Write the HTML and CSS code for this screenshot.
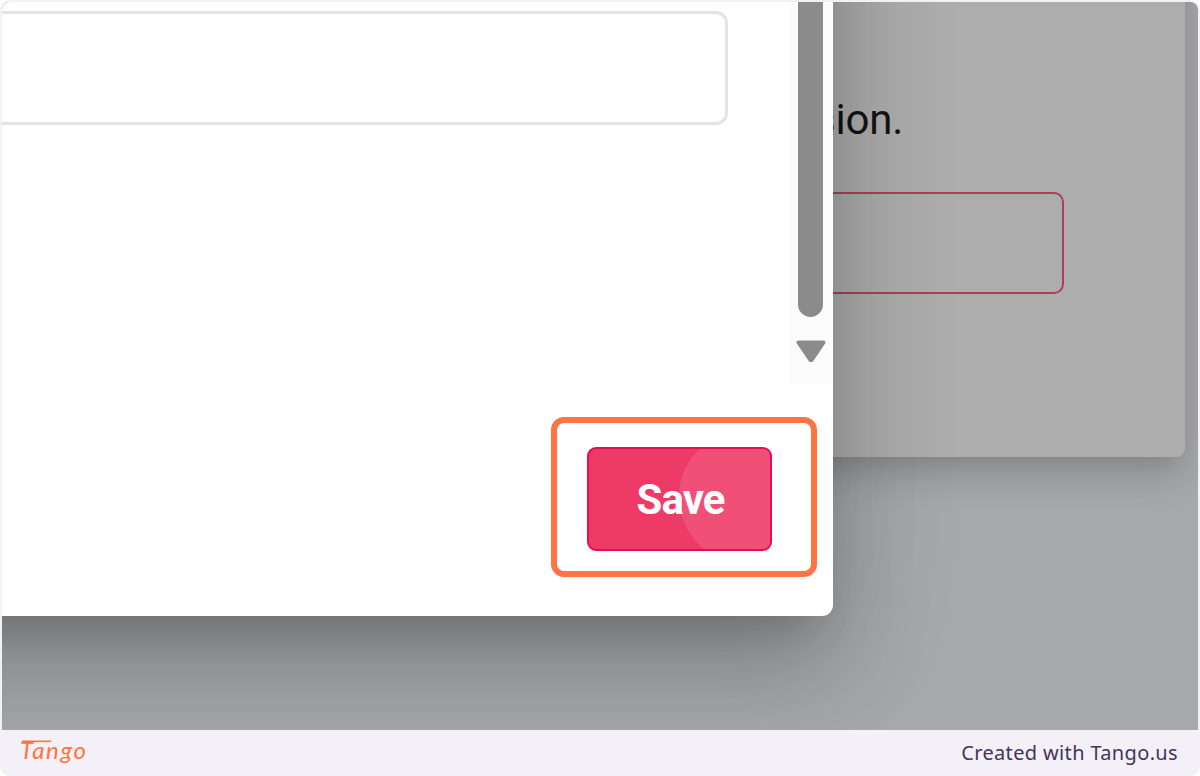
FILE: index.html
```html
<!DOCTYPE html>
<html lang="en">
<head>
    <meta charset="UTF-8">
    <meta name="viewport" content="width=device-width, initial-scale=1.0">
    <title>Save</title>
    <link rel="stylesheet" href="styles.css">
</head>
<body>
    <div class="frame">
        <div class="stage">
            <div class="card">
                <p class="card-text">sion.</p>
                <div class="card-input"></div>
            </div>

            <div class="modal">
                <div class="modal-body">
                    <div class="field"></div>
                    <div class="scrollbar">
                        <div class="scroll-thumb"></div>
                        <svg class="scroll-arrow" width="30" height="24" viewBox="0 0 30 24">
                            <path d="M2.5 3.5H27.5L16 20.5Q15 21.5 14 20.5Z" fill="#8b8b8b" stroke="#8b8b8b" stroke-width="4" stroke-linejoin="round"/>
                        </svg>
                    </div>
                </div>
                <div class="modal-footer">
                    <div class="highlight">
                        <button class="save-button"><span>Save</span></button>
                    </div>
                </div>
            </div>
        </div>

        <div class="footer">
            <svg class="logo" width="76" height="40" viewBox="0 0 76 40">
                <text class="logo-text" x="0" y="25.5" textLength="66">Tango</text>
                <path d="M2 8.3H31" stroke="#ff7442" stroke-width="1.6"/>
            </svg>
            <span class="credit">Created with Tango.us</span>
        </div>
    </div>
</body>
</html>
```
FILE: styles.css
```css
body {
    margin: 0;
    background: white;
    font-family: Roboto, Arial, sans-serif;
}

.frame {
    width: 1200px;
    height: 776px;
    padding: 2px 2px 0;
    box-sizing: border-box;
    background: #f3f1f7;
    border-radius: 10px;
    overflow: hidden;
}

.stage {
    position: relative;
    height: 728px;
    background: #a7a8aa;
    border-radius: 8px 8px 0 0;
    overflow: hidden;
}

.card {
    width: 1183px;
    height: 655px;
    margin-top: -200px;
    padding: 290px 121px 0 0;
    box-sizing: border-box;
    background: #adadad;
    border-radius: 0 0 8px 0;
    box-shadow: 0 14px 22px -9px rgba(0, 0, 0, 0.1),
                0 20px 40px 2px rgba(0, 0, 0, 0.09),
                0 9px 40px 4px rgba(0, 0, 0, 0.06);
}

.card-text {
    margin: 0 0 44px 812px;
    font-size: 42px;
    line-height: 56px;
    letter-spacing: -0.2px;
    color: #141414;
}

.card-input {
    height: 102px;
    box-sizing: border-box;
    border: 2px solid #ae3f58;
    border-radius: 10px;
}

/* dialog over the page, runs off the top and left edges */
.modal {
    position: absolute;
    top: -400px;
    left: -400px;
    width: 1231px;
    height: 1014px;
    padding: 400px 0 0 400px;
    box-sizing: border-box;
    display: flex;
    flex-direction: column;
    background: white;
    border-radius: 0 0 11px 0;
    box-shadow: 0 31px 43px -20px rgba(0, 0, 0, 0.18),
                0 56px 100px 6px rgba(0, 0, 0, 0.13),
                0 22px 120px 16px rgba(0, 0, 0, 0.12);
}

.modal-body {
    display: flex;
    justify-content: space-between;
    height: 382px;
}

.field {
    width: 726px;
    height: 114px;
    margin-top: 9px;
    box-sizing: border-box;
    border: 3px solid #e4e4e4;
    border-left: none;
    border-radius: 0 12px 12px 0;
}

.scrollbar {
    display: flex;
    flex-direction: column;
    align-items: center;
    width: 43px;
    margin-right: 1px;
    background: #fcfcfc;
}

.scroll-thumb {
    width: 25px;
    height: 315px;
    background: #8b8b8b;
    border-radius: 0 0 13px 13px;
}

.scroll-arrow {
    margin-top: 22px;
}

.modal-footer {
    display: flex;
    justify-content: flex-end;
    padding: 33px 16px 0 0;
}

.highlight {
    width: 266px;
    height: 160px;
    padding: 24px 0 0 30px;
    box-sizing: border-box;
    border: 6px solid #ff7442;
    border-radius: 13px;
}

.save-button {
    display: block;
    width: 185px;
    height: 104px;
    padding: 0 0 0 2px;
    border: 2px solid #ea0a55;
    border-radius: 9px;
    background: radial-gradient(circle at 156px 48px, #f05078 65.5px, #ee3a66 66.5px);
    color: white;
    font-family: Roboto, Arial, sans-serif;
    font-size: 42px;
    font-weight: 700;
    letter-spacing: -0.9px;
}

.footer {
    display: flex;
    justify-content: space-between;
    align-items: center;
    height: 46px;
    padding: 0 20px 0 18px;
}

.logo-text {
    font-family: Lato, sans-serif;
    font-size: 24px;
    font-style: italic;
    font-weight: 400;
    fill: #ff7442;
}

.credit {
    font-family: "Noto Sans", sans-serif;
    font-size: 20px;
    line-height: 24px;
    letter-spacing: 0.35px;
    color: #46335a;
}
```
